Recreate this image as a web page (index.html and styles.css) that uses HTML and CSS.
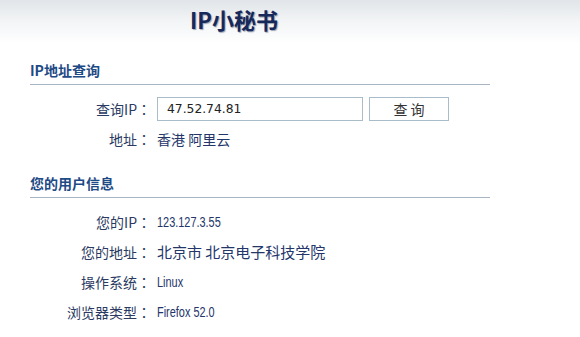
FILE: index.html
```html
<!DOCTYPE html>
<html lang="zh-CN">
<head>
<meta charset="utf-8">
<title>IP小秘书</title>
<link rel="stylesheet" href="styles.css">
</head>
<body>
<header class="top">
  <h1 class="title">IP小秘书</h1>
</header>
<main class="page">
  <section class="block">
    <h2 class="block-head">IP地址查询</h2>
    <div class="rows rows-query">
      <div class="row">
        <span class="label">查询IP<span class="colon" lang="ja">：</span></span>
        <div class="field">
          <input class="ip-input" type="text" value="47.52.74.81">
          <button class="btn" type="button">查 询</button>
        </div>
      </div>
      <div class="row">
        <span class="label">地址<span class="colon" lang="ja">：</span></span>
        <span class="value">香港 阿里云</span>
      </div>
    </div>
  </section>
  <section class="block">
    <h2 class="block-head">您的用户信息</h2>
    <div class="rows rows-info">
      <div class="row">
        <span class="label">您的IP<span class="colon" lang="ja">：</span></span>
        <span class="value"><span class="narrow">123.127.3.55</span></span>
      </div>
      <div class="row">
        <span class="label">您的地址<span class="colon" lang="ja">：</span></span>
        <span class="value wide">北京市 北京电子科技学院</span>
      </div>
      <div class="row">
        <span class="label">操作系统<span class="colon" lang="ja">：</span></span>
        <span class="value"><span class="narrow">Linux</span></span>
      </div>
      <div class="row">
        <span class="label">浏览器类型<span class="colon" lang="ja">：</span></span>
        <span class="value"><span class="narrow">Firefox 52.0</span></span>
      </div>
    </div>
  </section>
</main>
</body>
</html>
```

FILE: styles.css
```css
html, body {
  margin: 0;
  padding: 0;
  background: #ffffff;
}

body {
  font-family: "Noto Sans CJK SC", sans-serif;
  color: #2a3a62;
  width: 580px;
}

.top {
  height: 44px;
  background: linear-gradient(to bottom, #e1e5e9 0%, #f3f5f6 50%, #ffffff 100%);
}

.title {
  margin: 0;
  padding: 3px 0 0 190px;
  font-family: "Noto Sans CJK SC", sans-serif;
  font-size: 22px;
  line-height: 32px;
  font-weight: 700;
  color: #17285a;
  text-shadow: 1px 1px 1px #9aa3b2;
}

.page {
  padding: 16px 0 0 30px;
  width: 460px;
}

.block-head {
  margin: 0;
  font-family: "Noto Sans CJK SC", sans-serif;
  font-size: 14px;
  font-weight: 700;
  line-height: 20px;
  color: #1e4a86;
  padding-bottom: 4px;
  border-bottom: 1px solid #a8b6c4;
}

.rows {
  display: flex;
  flex-direction: column;
}

.rows-query {
  padding-top: 12px;
  gap: 8px;
  padding-bottom: 24px;
}

.rows-info {
  padding-top: 14px;
  gap: 10px;
}

.row {
  display: grid;
  grid-template-columns: 121px 1fr;
  column-gap: 6px;
  align-items: center;
  height: 20px;
}

.rows-query .row:first-child {
  height: 24px;
}

.label {
  text-align: right;
  font-size: 14px;
  line-height: 20px;
  color: #2a3a62;
  white-space: nowrap;
}

.colon {
  font-family: "Noto Sans CJK JP", sans-serif;
}

.value {
  display: flex;
  align-items: center;
  height: 20px;
  font-size: 14px;
  line-height: 20px;
  color: #24356a;
  white-space: nowrap;
}

.value.wide {
  font-size: 15px;
}

.narrow {
  font-family: "Liberation Sans", sans-serif;
  font-size: 14px;
  line-height: 20px;
  transform: scaleX(0.78);
  transform-origin: left center;
}

.field {
  display: flex;
  gap: 6px;
}

.ip-input {
  box-sizing: border-box;
  width: 206px;
  height: 24px;
  margin: 0;
  padding: 0 0 0 9px;
  border: 1px solid #a9bcc9;
  font-family: "DejaVu Sans", sans-serif;
  font-size: 12.3px;
  color: #222222;
  background: #ffffff;
  outline: none;
}

.btn {
  box-sizing: border-box;
  width: 80px;
  height: 24px;
  margin: 0;
  padding: 0;
  border: 1px solid #a9bcc9;
  background: #ffffff;
  font-family: "Noto Sans CJK SC", sans-serif;
  font-size: 14px;
  color: #333333;
}
```
